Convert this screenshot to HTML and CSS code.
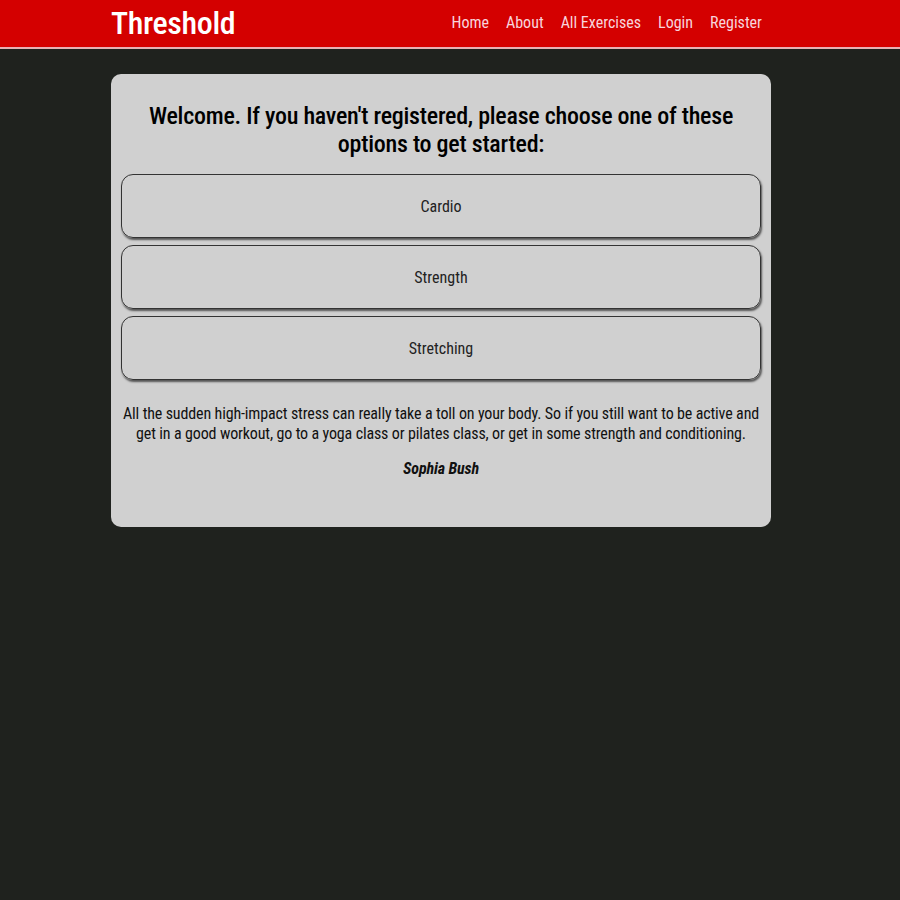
FILE: index.html
```html
<!DOCTYPE html>
<html lang="en">
<head>
<meta charset="utf-8">
<title>Threshold</title>
<link rel="stylesheet" href="styles.css">
</head>
<body>
<header class="navbar">
  <div class="nav-inner">
    <a class="brand" href="#">Threshold</a>
    <nav class="links">
      <a href="#">Home</a>
      <a href="#">About</a>
      <a href="#">All Exercises</a>
      <a href="#">Login</a>
      <a href="#">Register</a>
    </nav>
  </div>
</header>
<main class="card">
  <h1 class="title">Welcome. If you haven't registered, please choose one of these options to get started:</h1>
  <div class="options">
    <a class="option" href="#">Cardio</a>
    <a class="option" href="#">Strength</a>
    <a class="option" href="#">Stretching</a>
  </div>
  <blockquote class="quote">
    <p>All the sudden high-impact stress can really take a toll on your body. So if you still want to be active and get in a good workout, go to a yoga class or pilates class, or get in some strength and conditioning.</p>
    <p class="author">Sophia Bush</p>
  </blockquote>
</main>
</body>
</html>
```
FILE: styles.css
```css
* { box-sizing: border-box; }
html, body {
  margin: 0;
  padding: 0;
}
body {
  background: #1f221e;
  font-family: Roboto, "Liberation Sans", sans-serif;
  font-stretch: condensed;
  color: #111;
}
.navbar {
  background: #d40000;
  height: 49px;
  border-bottom: 2px solid #e8b0b4;
}
.nav-inner {
  width: 651px;
  margin-left: 111px;
  display: flex;
  align-items: center;
  justify-content: space-between;
  height: 45px;
}
.brand {
  color: #fff;
  text-decoration: none;
  font-size: 32px;
  font-weight: 500;
  letter-spacing: -0.35px;
}
.links {
  display: flex;
  gap: 17px;
}
.links a {
  color: #f8d4dc;
  text-decoration: none;
  font-size: 16px;
}
.card {
  width: 660px;
  margin: 25px 0 0 111px;
  background: #d0d0d0;
  border-radius: 10px;
  padding: 28px 10px 48px;
}
.title {
  margin: 0 0 16px;
  text-align: center;
  font-size: 24px;
  line-height: 28px;
  font-weight: 500;
  letter-spacing: -0.25px;
  color: #000;
}
.options {
  display: flex;
  flex-direction: column;
  gap: 7px;
}
.option {
  display: flex;
  align-items: center;
  justify-content: center;
  height: 64px;
  padding-top: 1px;
  border: 1px solid #333;
  border-radius: 12px;
  box-shadow: 1px 2px 2px #555;
  color: #222;
  text-decoration: none;
  font-size: 16px;
}
.quote {
  margin: 24px 0 0;
  text-align: center;
  font-size: 16px;
  line-height: 20px;
  letter-spacing: -0.14px;
}
.quote p { margin: 0; }
.quote .author {
  margin-top: 15px;
  font-style: italic;
  font-weight: 700;
}
```
